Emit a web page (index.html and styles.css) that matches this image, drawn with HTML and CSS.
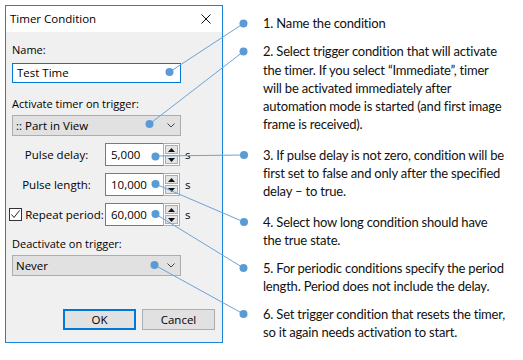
FILE: index.html
```html
<!DOCTYPE html>
<html>
<head>
<meta charset="utf-8">
<title>Timer Condition</title>
<link rel="stylesheet" href="styles.css">
</head>
<body>
<div class="page">
  <div class="dialog">
    <div class="titlebar">
      <span class="title">Timer Condition</span>
      <svg class="close" width="10" height="10" viewBox="0 0 10 10"><path d="M0.5 0.5 L9.5 9.5 M9.5 0.5 L0.5 9.5" stroke="#111" stroke-width="1" fill="none"/></svg>
    </div>
    <div class="dbody">
      <div class="label l-name">Name:</div>
      <div class="textbox focused">Test Time</div>
      <div class="label l-act">Activate timer on trigger:</div>
      <div class="combo c-act"><span>:: Part in View</span><svg class="chev" width="8" height="5" viewBox="0 0 8 5"><path d="M0.5 0.5 L4 4 L7.5 0.5" stroke="#444" stroke-width="1" fill="none"/></svg></div>
      <div class="row r1">
        <div class="rlabel">Pulse delay:</div>
        <div class="spin"><div class="spinbox">5,000</div><div class="spinbtns"><div class="sb"><svg width="7" height="4" viewBox="0 0 7 4"><path d="M3.5 0 L7 4 L0 4 Z" fill="#111"/></svg></div><div class="sb"><svg width="7" height="4" viewBox="0 0 7 4"><path d="M0 0 L7 0 L3.5 4 Z" fill="#111"/></svg></div></div></div>
        <span class="unit">s</span>
      </div>
      <div class="row r2">
        <div class="rlabel">Pulse length:</div>
        <div class="spin"><div class="spinbox">10,000</div><div class="spinbtns"><div class="sb"><svg width="7" height="4" viewBox="0 0 7 4"><path d="M3.5 0 L7 4 L0 4 Z" fill="#111"/></svg></div><div class="sb"><svg width="7" height="4" viewBox="0 0 7 4"><path d="M0 0 L7 0 L3.5 4 Z" fill="#111"/></svg></div></div></div>
        <span class="unit">s</span>
      </div>
      <div class="row r3">
        <div class="rlabel"><span class="check"><svg width="11" height="11" viewBox="0 0 11 11"><path d="M1.5 5.5 L4 8.5 L9.5 1.5" stroke="#222" stroke-width="1" fill="none"/></svg></span>Repeat period:</div>
        <div class="spin"><div class="spinbox">60,000</div><div class="spinbtns"><div class="sb"><svg width="7" height="4" viewBox="0 0 7 4"><path d="M3.5 0 L7 4 L0 4 Z" fill="#111"/></svg></div><div class="sb"><svg width="7" height="4" viewBox="0 0 7 4"><path d="M0 0 L7 0 L3.5 4 Z" fill="#111"/></svg></div></div></div>
        <span class="unit">s</span>
      </div>
      <div class="label l-deact">Deactivate on trigger:</div>
      <div class="combo c-deact"><span>Never</span><svg class="chev" width="8" height="5" viewBox="0 0 8 5"><path d="M0.5 0.5 L4 4 L7.5 0.5" stroke="#444" stroke-width="1" fill="none"/></svg></div>
      <div class="buttons">
        <button class="btn default">OK</button>
        <button class="btn">Cancel</button>
      </div>
    </div>
  </div>
  <div class="notes">
    <p class="note n1">1. Name the condition</p>
    <p class="note n2">2. Select trigger condition that will activate<br>the timer. If you select “Immediate”, timer<br>will be activated immediately after<br>automation mode is started (and first image<br>frame is received).</p>
    <p class="note n3">3. If pulse delay is not zero, condition will be<br>first set to false and only after the specified<br>delay – to true.</p>
    <p class="note n4">4. Select how long condition should have<br>the true state.</p>
    <p class="note n5">5. For periodic conditions specify the period<br>length. Period does not include the delay.</p>
    <p class="note n6">6. Set trigger condition that resets the timer,<br>so it again needs activation to start.</p>
  </div>
  <svg class="callouts" width="523" height="360" viewBox="0 0 523 360">
    <g stroke="#6aa3da" stroke-width="1" fill="none">
      <line x1="169.5" y1="72" x2="243.5" y2="23.5"/>
      <line x1="149.5" y1="124" x2="243.5" y2="51.5"/>
      <line x1="155.5" y1="156" x2="244" y2="155"/>
      <line x1="155.5" y1="184" x2="244" y2="222"/>
      <line x1="155.5" y1="214" x2="243.5" y2="268"/>
      <line x1="154.5" y1="265" x2="243.5" y2="314"/>
    </g>
    <g fill="#5b9bd5">
      <circle cx="169.5" cy="72" r="4"/>
      <circle cx="149.5" cy="124" r="4"/>
      <circle cx="155.5" cy="156.5" r="4"/>
      <circle cx="155.5" cy="184" r="4"/>
      <circle cx="155.5" cy="214" r="4"/>
      <circle cx="154.5" cy="265" r="4"/>
      <circle cx="243.5" cy="23.5" r="4"/>
      <circle cx="243.5" cy="51.5" r="4"/>
      <circle cx="244" cy="155" r="4"/>
      <circle cx="244" cy="222" r="4"/>
      <circle cx="243.5" cy="268" r="4"/>
      <circle cx="243.5" cy="314" r="4"/>
    </g>
  </svg>
</div>
</body>
</html>
```

FILE: styles.css
```css
* { box-sizing: border-box; }
html, body { margin: 0; padding: 0; background: #fff; }
.page {
  position: relative;
  width: 523px;
  height: 360px;
  padding: 5px 0 0 5px;
  display: flex;
  align-items: flex-start;
  overflow: hidden;
}
.dialog {
  width: 218px;
  height: 338px;
  border: 1px solid #1883d7;
  background: #f0f0f0;
  display: flex;
  flex-direction: column;
  font-family: "Open Sans", "Noto Sans", sans-serif;
  font-size: 11px;
  color: #000;
  flex-shrink: 0;
}
.titlebar {
  height: 26px;
  background: #fff;
  display: flex;
  align-items: center;
  justify-content: space-between;
  padding: 0 11px 0 4px;
}
.title { font-size: 11.5px; line-height: 14px; }
.close { display: block; }
.dbody {
  flex: 1;
  padding: 0 7px 0 6px;
  display: flex;
  flex-direction: column;
}
.label { line-height: 14px; height: 14px; white-space: nowrap; }
.l-name { margin-top: 11px; }
.l-act { margin-top: 14px; }
.l-deact { margin-top: 11px; }
.textbox {
  margin-top: 6px;
  width: 169px;
  height: 20px;
  background: #fff;
  border: 1px solid #7a7a7a;
  padding: 0 4px;
  line-height: 18px;
  font-size: 11.5px;
}
.textbox.focused { border-color: #0078d7; }
.combo {
  margin-top: 4px;
  width: 169px;
  height: 21px;
  background: #e1e1e1;
  border: 1px solid #adadad;
  display: flex;
  align-items: center;
  justify-content: space-between;
  padding: 0 5px 0 3px;
  font-size: 11.5px;
}
.chev { display: block; }
.row {
  margin-top: 7px;
  height: 23px;
  display: flex;
  align-items: center;
}
.r1 { margin-top: 7px; }
.rlabel {
  width: 89px;
  display: flex;
  align-items: center;
  justify-content: center;
  white-space: nowrap;
  font-size: 11.5px;
}
.check {
  width: 13px;
  height: 13px;
  border: 1px solid #333;
  background: #fff;
  display: flex;
  align-items: center;
  justify-content: center;
  margin-right: 3px;
}
.check svg { display: block; }
.spin {
  margin-left: 4px;
  display: flex;
  height: 23px;
}
.spinbox {
  width: 58px;
  height: 23px;
  background: #fff;
  border: 1px solid #7a7a7a;
  border-right: none;
  padding: 0 5px;
  line-height: 21px;
  font-size: 11.5px;
}
.spinbtns {
  width: 17px;
  height: 23px;
  border: 1px solid #adadad;
  background: #fff;
  display: flex;
  flex-direction: column;
  padding: 1px;
  gap: 1px;
}
.sb {
  flex: 1;
  background: #e5e5e5;
  border: 1px solid #adadad;
  display: flex;
  align-items: center;
  justify-content: center;
}
.sb svg { display: block; }
.unit { margin-left: 5px; font-size: 11.5px; }
.buttons {
  margin-top: 33px;
  display: flex;
  justify-content: flex-end;
  gap: 6px;
}
.btn {
  width: 73px;
  height: 21px;
  background: #e1e1e1;
  border: 1px solid #adadad;
  font-family: "Open Sans", "Noto Sans", sans-serif;
  font-size: 11.5px;
  color: #000;
  padding: 0;
  margin: 0;
  line-height: 18px;
}
.btn.default { border: 2px solid #0078d7; }
.notes {
  margin-left: 40px;
  font-family: Lato, "Open Sans", sans-serif;
  font-size: 13px;
  letter-spacing: -0.2px;
  line-height: 18.3px;
  color: #111;
  white-space: nowrap;
}
.note { margin: 0; }
.n1 { margin-top: 9px; }
.n2 { margin-top: 10px; }
.n3 { margin-top: 12px; }
.n4 { margin-top: 12px; }
.n5 { margin-top: 9.5px; }
.n6 { margin-top: 9.5px; }
.callouts {
  position: absolute;
  left: 0;
  top: 0;
  pointer-events: none;
}
```
